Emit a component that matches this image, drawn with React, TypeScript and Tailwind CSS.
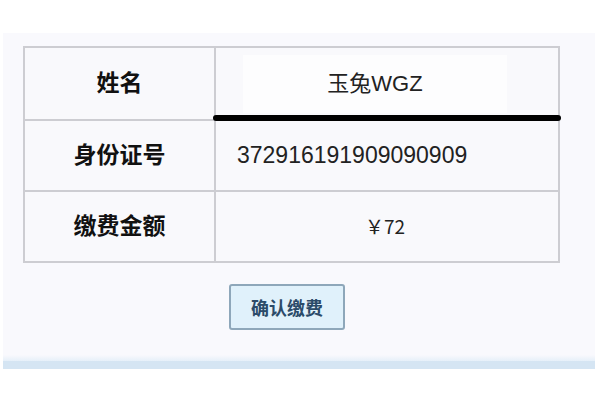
const CJK = "font-['Liberation_Sans','Noto_Sans_CJK_SC',sans-serif]"

const ROWS = [
  { label: '姓名', value: '玉兔WGZ', kind: 'name' },
  { label: '身份证号', value: '372916191909090909', kind: 'id' },
  { label: '缴费金额', value: '￥72', kind: 'amount' },
]

export default function App() {
  return (
    <div className={`h-[400px] w-[600px] bg-white pt-[33px] ${CJK}`}>
      {/* panel */}
      <div className="ml-[3px] w-[592px] bg-[#f9f9fd]">
        <div className="pl-[20px] pt-[13px]">
          <div className="w-[537px] border-2 border-[#cdcdd2] bg-[#f9f9fc]">
            {ROWS.map((row, i) => (
              <div
                key={row.label}
                className={`relative flex h-[71px] ${i > 0 ? 'border-t-2 border-[#cdcdd2]' : ''}`}
              >
                <div className="flex w-[191px] items-center justify-center border-r-2 border-[#cdcdd2] text-[23px] font-bold text-[#111]">
                  {row.label}
                </div>
                <div className="flex flex-1 items-center">
                  {row.kind === 'name' && (
                    <div className="ml-[27px] flex h-[58px] w-[264px] items-center justify-center bg-[#fdfdfe] text-[22px] text-[#222]">
                      玉兔WGZ
                    </div>
                  )}
                  {row.kind === 'id' && (
                    <span className="ml-[21px] text-[23px] text-[#222]">{row.value}</span>
                  )}
                  {row.kind === 'amount' && (
                    <span className="ml-[149px] font-['Noto_Sans_CJK_SC',sans-serif] text-[19px] text-[#222]">
                      {row.value}
                    </span>
                  )}
                </div>
                {i === 0 && (
                  <div className="absolute top-[67px] left-[188px] z-10 h-[6px] w-[348px] rounded-[3px] bg-black" />
                )}
              </div>
            ))}
          </div>
        </div>

        <div className="flex pb-[25px] pl-[226px] pt-[21px]">
          <button className="flex h-[46px] w-[116px] items-center justify-center rounded-[3px] border-2 border-[#8ea7ba] bg-[#e0f1fb] font-['Noto_Sans_CJK_SC',sans-serif] text-[18px] font-bold text-[#2b4b69]">
            确认缴费
          </button>
        </div>

        {/* bottom strip */}
        <div className="h-[6px] bg-gradient-to-b from-[#f9f9fd] to-[#e6f0f9]" />
        <div className="h-[8px] bg-[#d5e5f3]" />
      </div>
    </div>
  )
}
